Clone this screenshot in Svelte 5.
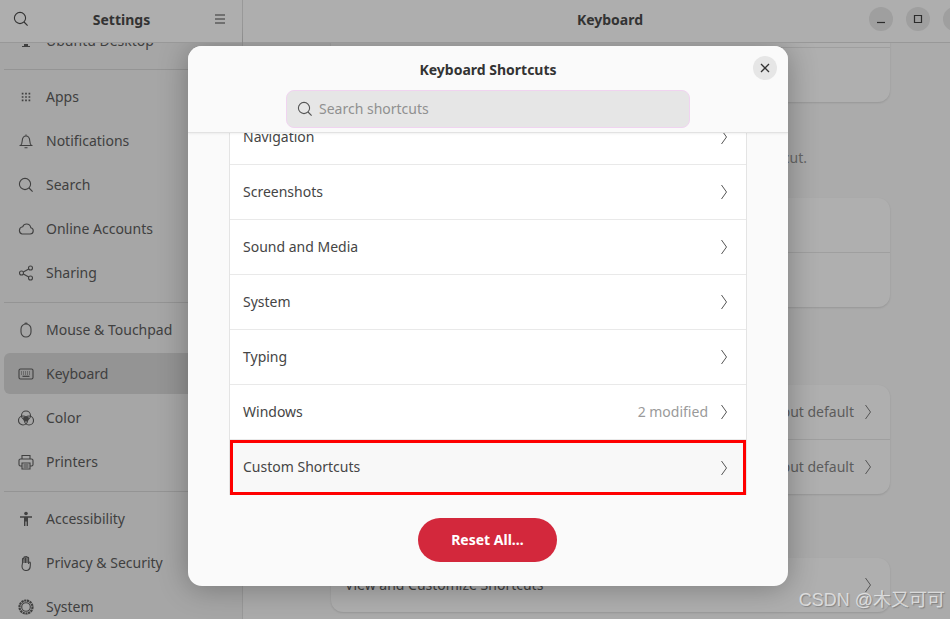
<script lang="ts">
	const groups = [
		[
			{ label: 'Apps', icon: 'apps' },
			{ label: 'Notifications', icon: 'bell' },
			{ label: 'Search', icon: 'search' },
			{ label: 'Online Accounts', icon: 'cloud' },
			{ label: 'Sharing', icon: 'share' }
		],
		[
			{ label: 'Mouse & Touchpad', icon: 'mouse' },
			{ label: 'Keyboard', icon: 'keyboard', active: true },
			{ label: 'Color', icon: 'color' },
			{ label: 'Printers', icon: 'printer' }
		],
		[
			{ label: 'Accessibility', icon: 'access' },
			{ label: 'Privacy & Security', icon: 'hand' },
			{ label: 'System', icon: 'gear' }
		]
	];

	const shortcuts = [
		{ label: 'Navigation' },
		{ label: 'Screenshots' },
		{ label: 'Sound and Media' },
		{ label: 'System' },
		{ label: 'Typing' },
		{ label: 'Windows', note: '2 modified' },
		{ label: 'Custom Shortcuts', marked: true }
	];
</script>

{#snippet chevron()}
	<svg class="chevron" width="8" height="16" viewBox="0 0 8 16"><path d="M1.500 1 6.500 8l-5 7" fill="none" stroke="currentColor" stroke-width="1" /></svg>
{/snippet}

{#snippet glass()}
	<svg width="16" height="16" viewBox="0 0 16 16" fill="none" stroke="currentColor" stroke-width="1.100"><circle cx="7" cy="7" r="5.600" /><path d="m11 11 3.600 3.600" /></svg>
{/snippet}

{#snippet icon(name)}
	<svg class="nav-icon" width="16" height="16" viewBox="0 0 16 16" fill="none" stroke="currentColor" stroke-width="1.100">
		{#if name === 'apps'}
			<path d="M3 3h2v2H3zM7 3h2v2H7zM11 3h2v2h-2zM3 7h2v2H3zM7 7h2v2H7zM11 7h2v2h-2zM3 11h2v2H3zM7 11h2v2H7zM11 11h2v2h-2z" fill="currentColor" stroke="none" transform="translate(1.200 1.200) scale(.85)" />
		{:else if name === 'bell'}
			<path d="M2.500 12.500c1.300-1 1.600-2.500 1.700-4.500C4.400 5 5.800 3 8 3s3.600 2 3.800 5c.1 2 .4 3.500 1.700 4.500zM8 1.500V3M6.500 14.800h3" />
		{:else if name === 'search'}
			<circle cx="7" cy="7" r="5.600" /><path d="m11 11 3.600 3.600" />
		{:else if name === 'cloud'}
			<path d="M4 13h8.200a3.200 3.200 0 0 0 .6-6.300C12.300 4.500 10.600 3 8.600 3 6.800 3 5.300 4.100 4.700 5.800A3.700 3.700 0 0 0 4 13z" />
		{:else if name === 'share'}
			<circle cx="3.500" cy="8" r="2" /><circle cx="12.500" cy="3" r="2" /><circle cx="12.500" cy="13" r="2" /><path d="m5.300 7 5.500-3M5.300 9l5.500 3" />
		{:else if name === 'mouse'}
			<rect x="3" y="2" width="10" height="13" rx="5" /><path d="M6.500 1.500c1-.5 2-.5 3 0" />
		{:else if name === 'keyboard'}
			<rect x="1" y="3" width="14" height="10" rx="1.500" />
			<path d="M3 6h10M3 8h10" stroke-dasharray="1 1" stroke-width="1.200" /><path d="M4.500 10.300h7" stroke-width="1.200" />
		{:else if name === 'color'}
			<circle cx="8" cy="5.500" r="4.500" /><circle cx="5" cy="10.500" r="4.500" /><circle cx="11" cy="10.500" r="4.500" />
			<path d="M8 6.500a4.500 4.500 0 0 1 2.900 1.100 4.500 4.500 0 0 1-.8 3.400 4.500 4.500 0 0 1-4.200 0 4.500 4.500 0 0 1-.8-3.400A4.500 4.500 0 0 1 8 6.500z" fill="currentColor" stroke="none" />
		{:else if name === 'printer'}
			<path d="M4 5V1.500h8V5M4 12H2.500a1.500 1.500 0 0 1-1.500-1.500v-4A1.500 1.500 0 0 1 2.500 5h11A1.500 1.500 0 0 1 15 6.500v4a1.500 1.500 0 0 1-1.500 1.500H12" />
			<path d="M4 9h8v6H4zM5.500 11h5M5.500 13h5" />
		{:else if name === 'access'}
			<circle cx="8" cy="2.500" r="1.800" fill="currentColor" stroke="none" />
			<path d="M2 5.200h12v1.500H10V15H8.600v-4.500H7.400V15H6V6.700H2z" fill="currentColor" stroke="none" />
		{:else if name === 'hand'}
			<path d="M4.500 8V4.200c0-1.100 1.500-1.100 1.500 0V2.700c0-1.100 1.500-1.100 1.500 0v-.4c0-1 1.500-1 1.500 0v.8c0-1.100 1.600-1.100 1.600 0V9c0-.8.500-2 1.300-2 .8.100.4 1.700.4 3.500 0 3-1.800 5-4.300 5C5.300 15.500 4 13.500 4 11z" /><path d="M6 4v4M7.500 3v5M9 3v5" />
		{:else if name === 'gear'}
			<circle cx="8" cy="8" r="4.300" /><circle cx="8" cy="8" r="6.500" stroke-width="2.200" stroke-dasharray="2.200 .6" />
		{/if}
	</svg>
{/snippet}

<div class="window">
	<aside class="sidebar">
		<header class="sidebar-bar">
			<span class="bar-glyph">{@render glass()}</span>
			<strong>Settings</strong>
			<svg width="12" height="10" viewBox="0 0 12 10"><path d="M1 1h10M1 5h10M1 9h10" stroke="currentColor" stroke-width="1" /></svg>
		</header>
		<nav class="nav">
			<div class="nav-cut">
				<a class="nav-row">
					<svg class="nav-icon" width="16" height="16" viewBox="0 0 16 16"><path d="M2 2h12v8H2zM6 11h4v2h2v1H4v-1h2z" fill="currentColor" /></svg>
					<span>Ubuntu Desktop</span>
				</a>
			</div>
			{#each groups as group}
				<hr />
				<div class="nav-group">
					{#each group as item}
						<a class="nav-row" class:active={item.active}>
							{@render icon(item.icon)}
							<span>{item.label}</span>
						</a>
					{/each}
				</div>
			{/each}
		</nav>
	</aside>

	<main class="content">
		<header class="content-bar">
			<strong>Keyboard</strong>
			<div class="window-buttons">
				<button aria-label="Minimize"><svg width="10" height="10" viewBox="0 0 10 10"><path d="M1 8.500h8" stroke="currentColor" stroke-width="1.200" /></svg></button>
				<button aria-label="Maximize"><svg width="10" height="10" viewBox="0 0 10 10"><path d="M1.500 1.500h7v7h-7z" fill="none" stroke="currentColor" stroke-width="1.200" /></svg></button>
				<button aria-label="Close"><svg width="10" height="10" viewBox="0 0 10 10"><path d="m1.500 1.500 7 7m0-7-7 7" stroke="currentColor" stroke-width="1.200" /></svg></button>
			</div>
		</header>
		<div class="page">
			<section class="card first"><div class="card-row"></div><div class="card-row tall"></div></section>
			<p class="hint">Shortcuts can be set for each shortcut.</p>
			<section class="card"><div class="card-row"></div><div class="card-row"></div></section>
			<section class="card lower">
				<div class="card-row"><span>Input default</span>{@render chevron()}</div>
				<div class="card-row"><span>Input default</span>{@render chevron()}</div>
			</section>
			<section class="card last">
				<div class="card-row"><b>View and Customize Shortcuts</b>{@render chevron()}</div>
			</section>
		</div>
	</main>

	<div class="dialog">
		<header class="dialog-head">
			<strong>Keyboard Shortcuts</strong>
			<button class="dialog-close" aria-label="Close"><svg width="10" height="10" viewBox="0 0 10 10"><path d="m1 1 8 8m0-8-8 8" stroke="currentColor" stroke-width="1.300" /></svg></button>
			<label class="search">
				{@render glass()}
				<input placeholder="Search shortcuts" />
			</label>
		</header>
		<div class="dialog-body">
			<ul class="list">
				{#each shortcuts as row}
					<li class:marked={row.marked}>
						<span class="row-label">{row.label}</span>
						{#if row.note}<span class="row-note">{row.note}</span>{/if}
						{@render chevron()}
					</li>
				{/each}
			</ul>
			<button class="reset">Reset All…</button>
		</div>
	</div>

	<div class="watermark">CSDN @木又可可</div>
</div>

<style>
	:global(body) {
		margin: 0;
		background: #ababab;
	}

	.window {
		position: relative;
		display: flex;
		width: 950px;
		height: 619px;
		overflow: hidden;
		font-family: 'Noto Sans', sans-serif;
		font-size: 14px;
		color: #3d3d3d;
		background: #ababab;
	}

	.sidebar {
		width: 242px;
		flex: none;
		display: flex;
		flex-direction: column;
		background: #a6a6a6;
		border-right: 1px solid #999;
	}

	.sidebar-bar,
	.content-bar {
		height: 43px;
		flex: none;
		display: flex;
		align-items: center;
		box-sizing: border-box;
		padding-bottom: 4px;
		background: #aeaeae;
		border-bottom: 1px solid #989898;
		position: relative;
		z-index: 1;
	}

	.sidebar-bar {
		justify-content: space-between;
		padding-left: 13px;
		padding-right: 16px;
		color: #333;
	}

	.bar-glyph {
		display: flex;
	}

	strong {
		font-weight: 700;
		font-size: 14px;
	}

	.nav {
		flex: 1;
		min-height: 0;
		overflow: hidden;
		padding: 0 4px;
	}

	.nav-cut {
		margin-top: -23px;
		height: 49px;
	}

	hr {
		margin: 0;
		height: 1px;
		border: 0;
		background: #949494;
	}

	.nav-group {
		padding: 6px 0 9px;
	}

	.nav-row {
		height: 41px;
		margin-bottom: 3px;
		display: flex;
		align-items: center;
		gap: 12px;
		padding: 0 14px;
		border-radius: 6px;
		color: #404040;
	}

	.nav-group .nav-row:last-child {
		margin-bottom: 0;
	}

	.nav-row.active {
		background: #949494;
	}

	.nav-icon {
		flex: none;
	}

	.content {
		flex: 1;
		min-width: 0;
		display: flex;
		flex-direction: column;
	}

	.content-bar {
		justify-content: center;
		padding-left: 27px;
		color: #333;
	}

	.window-buttons {
		position: absolute;
		right: -17px;
		top: 7px;
		display: flex;
		gap: 13px;
	}

	.window-buttons button {
		width: 24px;
		height: 24px;
		padding: 0;
		border: 0;
		border-radius: 50%;
		display: flex;
		align-items: center;
		justify-content: center;
		background: #9f9f9f;
		color: #2c2c2c;
	}

	.page {
		flex: 1;
		min-height: 0;
		overflow: hidden;
		padding: 0 60px 0 88px;
	}

	.card {
		background: #afafaf;
		border-radius: 12px;
		box-shadow: 0 1px 2px rgba(0, 0, 0, 0.12);
	}

	.card.first {
		margin-top: -2px;
		border-radius: 0 0 12px 12px;
	}

	.card-row {
		height: 54px;
		display: flex;
		align-items: center;
		justify-content: flex-end;
		gap: 10px;
		padding: 0 18px 0 14px;
		color: #5c5c5c;
		box-sizing: border-box;
	}

	.card-row span,
	.card-row b {
		margin-bottom: 2px;
	}

	.card-row + .card-row {
		border-top: 1px solid #9f9f9f;
		height: 55px;
	}

	.card.first .card-row {
		height: 6px;
	}

	.card.first .card-row.tall {
		height: 55px;
	}

	.card-row b {
		font-weight: 400;
		margin-right: auto;
		color: #404040;
	}

	.hint {
		margin: 46px 0 30px;
		height: 20px;
		line-height: 20px;
		text-align: right;
		padding-right: 83px;
		color: #666;
	}

	.card.lower {
		margin-top: 78px;
	}

	.card.last {
		margin-top: 64px;
	}

	.dialog {
		position: absolute;
		left: 188px;
		top: 46px;
		width: 600px;
		height: 540px;
		display: flex;
		flex-direction: column;
		overflow: hidden;
		border-radius: 14px;
		background: #fafafa;
		box-shadow: 0 2px 30px rgba(0, 0, 0, 0.3);
	}

	.dialog-head {
		height: 87px;
		flex: none;
		box-sizing: border-box;
		display: flex;
		flex-direction: column;
		align-items: center;
		padding-top: 14px;
		position: relative;
		z-index: 1;
		background: #fafafa;
		border-bottom: 1px solid #e2e2e2;
		box-shadow: 0 1px 2px rgba(0, 0, 0, 0.06);
		color: #333;
	}

	.dialog-close {
		position: absolute;
		right: 11px;
		top: 10px;
		width: 24px;
		height: 24px;
		padding: 0;
		border: 0;
		border-radius: 50%;
		display: flex;
		align-items: center;
		justify-content: center;
		background: #e6e6e6;
		color: #333;
	}

	.search {
		margin-top: 11px;
		width: 404px;
		height: 38px;
		box-sizing: border-box;
		display: flex;
		align-items: center;
		gap: 6px;
		padding: 0 10px;
		border: 1px solid #f0d4f0;
		border-radius: 8px;
		background: #e6e6e6;
		color: #555;
	}

	.search input {
		flex: 1;
		border: 0;
		outline: 0;
		padding: 0 0 2px;
		background: transparent;
		font: inherit;
	}

	.search input::placeholder {
		color: #909090;
		opacity: 1;
	}

	.dialog-body {
		flex: 1;
		min-height: 0;
		display: flex;
		flex-direction: column;
		align-items: center;
	}

	.list {
		list-style: none;
		margin: -23px 0 0;
		padding: 0;
		width: 518px;
		box-sizing: border-box;
		background: #fff;
		border: solid #e4e4e4;
		border-width: 0 1px;
	}

	.list li {
		height: 55px;
		box-sizing: border-box;
		display: flex;
		align-items: center;
		gap: 12px;
		padding: 0 18px 0 13px;
		border-bottom: 1px solid #e9e9e9;
		color: #454545;
	}

	.row-label,
	.row-note {
		margin-bottom: 2px;
	}

	.list li.marked {
		padding: 0 15px 0 10px;
		background: #f8f8f8;
		border: 3px solid #f00;
	}

	.row-label {
		margin-right: auto;
	}

	.row-note {
		color: #9a9a9a;
	}

	.chevron {
		flex: none;
		color: #555;
	}

	.reset {
		margin: 23px 1px 0 0;
		width: 139px;
		height: 44px;
		padding: 0 0 2px;
		border: 0;
		border-radius: 22px;
		background: #d3283c;
		color: #fff;
		font: inherit;
		font-weight: 700;
	}

	.watermark {
		position: absolute;
		right: 5px;
		bottom: 8px;
		font-family: 'Liberation Sans', 'Noto Sans CJK SC', sans-serif;
		font-size: 18px;
		color: rgba(255, 255, 255, 0.65);
		text-shadow: 1px 1px 1px rgba(0, 0, 0, 0.25);
	}
</style>
